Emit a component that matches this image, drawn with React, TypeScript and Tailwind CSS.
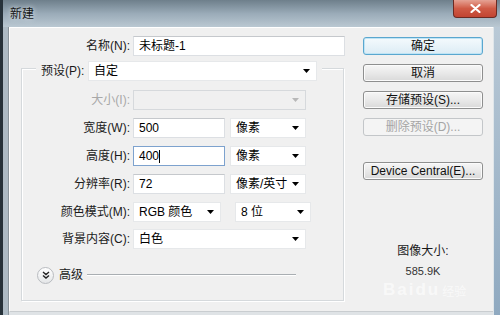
import React from "react";

const FONT = { fontFamily: '"Liberation Sans", "Noto Sans CJK SC", sans-serif' };

function Arrow({ disabled = false }: { disabled?: boolean }) {
  return (
    <svg width="7" height="4" viewBox="0 0 7 4" className="shrink-0">
      <path d="M0 0 H7 L3.5 4 Z" fill={disabled ? "#b8b8b8" : "#000"} />
    </svg>
  );
}

function Input({ value, w, focused = false, caret = false }: { value: string; w: string; focused?: boolean; caret?: boolean }) {
  return (
    <div
      className={`${w} h-[20px] bg-white border flex items-center pl-[5px] text-[12px] text-black ${
        focused ? "border-[#7da2ce]" : "border-[#dcdfe3] border-t-[#c5c8cc]"
      }`}
    >
      <span>{value}</span>
      {caret && <span className="w-[1px] h-[13px] bg-black" />}
    </div>
  );
}

function Select({ value, w, disabled = false }: { value: string; w: string; disabled?: boolean }) {
  return (
    <div
      className={`${w} h-[20px] border flex items-center justify-between pl-[5px] pr-[6px] text-[12px] ${
        disabled ? "bg-[#f0f0f0] border-[#d6d9dc]" : "bg-white border-[#e6e8ea]"
      }`}
    >
      <span className="whitespace-nowrap">{value}</span>
      <Arrow disabled={disabled} />
    </div>
  );
}

function Row({ label, disabled = false, children, className = "" }: { label: string; disabled?: boolean; children: React.ReactNode; className?: string }) {
  return (
    <div className={`flex items-center h-[20px] ${className}`}>
      <div className={`w-[111px] text-right text-[12px] pr-[3px] whitespace-nowrap ${disabled ? "text-[#a8a8a8]" : "text-[#1a1a1a]"}`}>
        {label}
      </div>
      <div className="flex items-center gap-[5px]">{children}</div>
    </div>
  );
}

function Button({ label, primary = false, disabled = false, className = "" }: { label: string; primary?: boolean; disabled?: boolean; className?: string }) {
  const look = disabled
    ? "border-[#c3c6c9] bg-[#f4f4f4] text-[#a5a5a5]"
    : primary
    ? "border-[#5aa7cf] bg-gradient-to-b from-[#f4fafd] to-[#dcecf5] text-[#111] shadow-[inset_0_0_0_1px_#bfe4f5]"
    : "border-[#8e8f8f] bg-gradient-to-b from-[#f6f6f6] via-[#e9e9e9] to-[#d9d9d9] text-[#111] shadow-[inset_0_0_0_1px_#fbfbfb]";
  return (
    <div className={`w-[120px] h-[18px] rounded-[3px] border flex items-center justify-center text-[12px] whitespace-nowrap ${look} ${className}`}>
      {label}
    </div>
  );
}

export default function App() {
  return (
    <div className="w-[500px] h-[315px] overflow-hidden relative flex flex-col bg-[#dfe3e6]" style={FONT}>
      {/* Title bar */}
      <div className="h-[27px] shrink-0 flex items-start justify-between bg-gradient-to-b from-[#6e7f8b] via-[#9aabb8] to-[#bac8d2] border-l-[3px] border-[#27323a]">
        <div className="pl-[7px] pt-[5px] text-[12px] text-[#151515] [text-shadow:0_0_5px_#e8eef2]">新建</div>
        <div className="mr-[3px] w-[44px] h-[18px] rounded-b-[4px] border border-t-0 border-[#6b2a22] bg-gradient-to-b from-[#e5a294] via-[#cf5a45] to-[#c24431] flex items-center justify-center">
          <svg width="11" height="9" viewBox="0 0 11 9">
            <path d="M1.5 1 L9.5 8 M9.5 1 L1.5 8" stroke="#fff" strokeWidth="2.2" strokeLinecap="round" />
          </svg>
        </div>
      </div>

      {/* Body */}
      <div className="flex flex-1 min-h-0">
        <div className="w-[9px] shrink-0 border-l-[3px] border-[#27323a] bg-[#aebbc5] border-r border-r-[#8b959c]" />

        {/* Client area */}
        <div className="w-[484px] h-[285px] bg-[#f0f0f0] border-t border-l border-white border-b border-b-[#c9cdd0] flex pt-[8px] pl-[11px]">
          {/* Left column */}
          <div className="w-[324px] flex flex-col">
            <div className="flex items-center h-[20px]">
              <div className="w-[112px] text-right text-[12px] pr-[3px] text-[#1a1a1a]">名称(N):</div>
              <Input value="未标题-1" w="w-[212px]" />
            </div>

            {/* Group box */}
            <div className="mt-[12px] w-[323px] h-[233px] border border-[#d5d9dc] shadow-[inset_1px_1px_0_#fff,1px_1px_0_#fff] flex flex-col">
              <div className="-mt-[8px] ml-[14px] self-start bg-[#f0f0f0] flex items-center h-[20px] px-[5px] gap-[1px]">
                <span className="w-[46px] text-[12px] text-[#1a1a1a] whitespace-nowrap">预设(P):</span>
                <Select value="自定" w="w-[229px]" />
              </div>

              <Row label="大小(I):" disabled className="mt-[9px]">
                <Select value="" w="w-[173px]" disabled />
              </Row>
              <Row label="宽度(W):" className="mt-[8px]">
                <Input value="500" w="w-[92px]" />
                <Select value="像素" w="w-[76px]" />
              </Row>
              <Row label="高度(H):" className="mt-[8px]">
                <Input value="400" w="w-[92px]" focused caret />
                <Select value="像素" w="w-[76px]" />
              </Row>
              <Row label="分辨率(R):" className="mt-[8px]">
                <Input value="72" w="w-[92px]" />
                <Select value="像素/英寸" w="w-[76px]" />
              </Row>
              <Row label="颜色模式(M):" className="mt-[8px]">
                <Select value="RGB 颜色" w="w-[88px]" />
                <div className="w-[4px]" />
                <Select value="8 位" w="w-[76px]" />
              </Row>
              <Row label="背景内容(C):" className="mt-[7px]">
                <Select value="白色" w="w-[173px]" />
              </Row>

              {/* Advanced */}
              <div className="mt-[17px] flex items-center h-[18px] pl-[15px]">
                <div className="w-[17px] h-[17px] rounded-full border border-[#b9bcc0] bg-gradient-to-b from-white to-[#e4e6e8] flex items-center justify-center">
                  <svg width="8" height="8" viewBox="0 0 8 8">
                    <path d="M1 1 L4 3.5 L7 1 M1 4.5 L4 7 L7 4.5" fill="none" stroke="#222" strokeWidth="1.4" />
                  </svg>
                </div>
                <span className="ml-[5px] text-[12px] text-[#1a1a1a]">高级</span>
                <div className="ml-[4px] w-[209px] h-[2px] border-t border-[#a9aeb2] border-b border-b-white" />
              </div>
            </div>
          </div>

          {/* Right column */}
          <div className="ml-[18px] w-[120px] flex flex-col items-center relative">
            <Button label="确定" primary className="mt-[1px]" />
            <Button label="取消" className="mt-[9px]" />
            <Button label="存储预设(S)..." className="mt-[9px]" />
            <Button label="删除预设(D)..." disabled className="mt-[9px]" />
            <Button label="Device Central(E)..." className="mt-[26px]" />

            <div className="mt-[64px] text-[12px] text-[#1a1a1a] leading-[14px]">图像大小:</div>
            <div className="mt-[7px] text-[11px] text-[#333] leading-[13px]">585.9K</div>

            {/* watermark */}
            <div className="absolute left-[20px] top-[246px] flex items-end gap-[2px] text-white/60 pointer-events-none">
              <span className="text-[17px] font-bold tracking-[2px] leading-[15px]" style={{ fontFamily: '"Liberation Sans", sans-serif' }}>
                Baidu
              </span>
              <span className="text-[12px] leading-[13px]" style={{ fontFamily: '"Noto Sans CJK SC", sans-serif' }}>经验</span>
            </div>
          </div>
        </div>

        <div className="flex-1 bg-gradient-to-b from-[#b9c9d6] to-[#8fa9c0] border-l border-[#dfe6ea]" />
      </div>
    </div>
  );
}
